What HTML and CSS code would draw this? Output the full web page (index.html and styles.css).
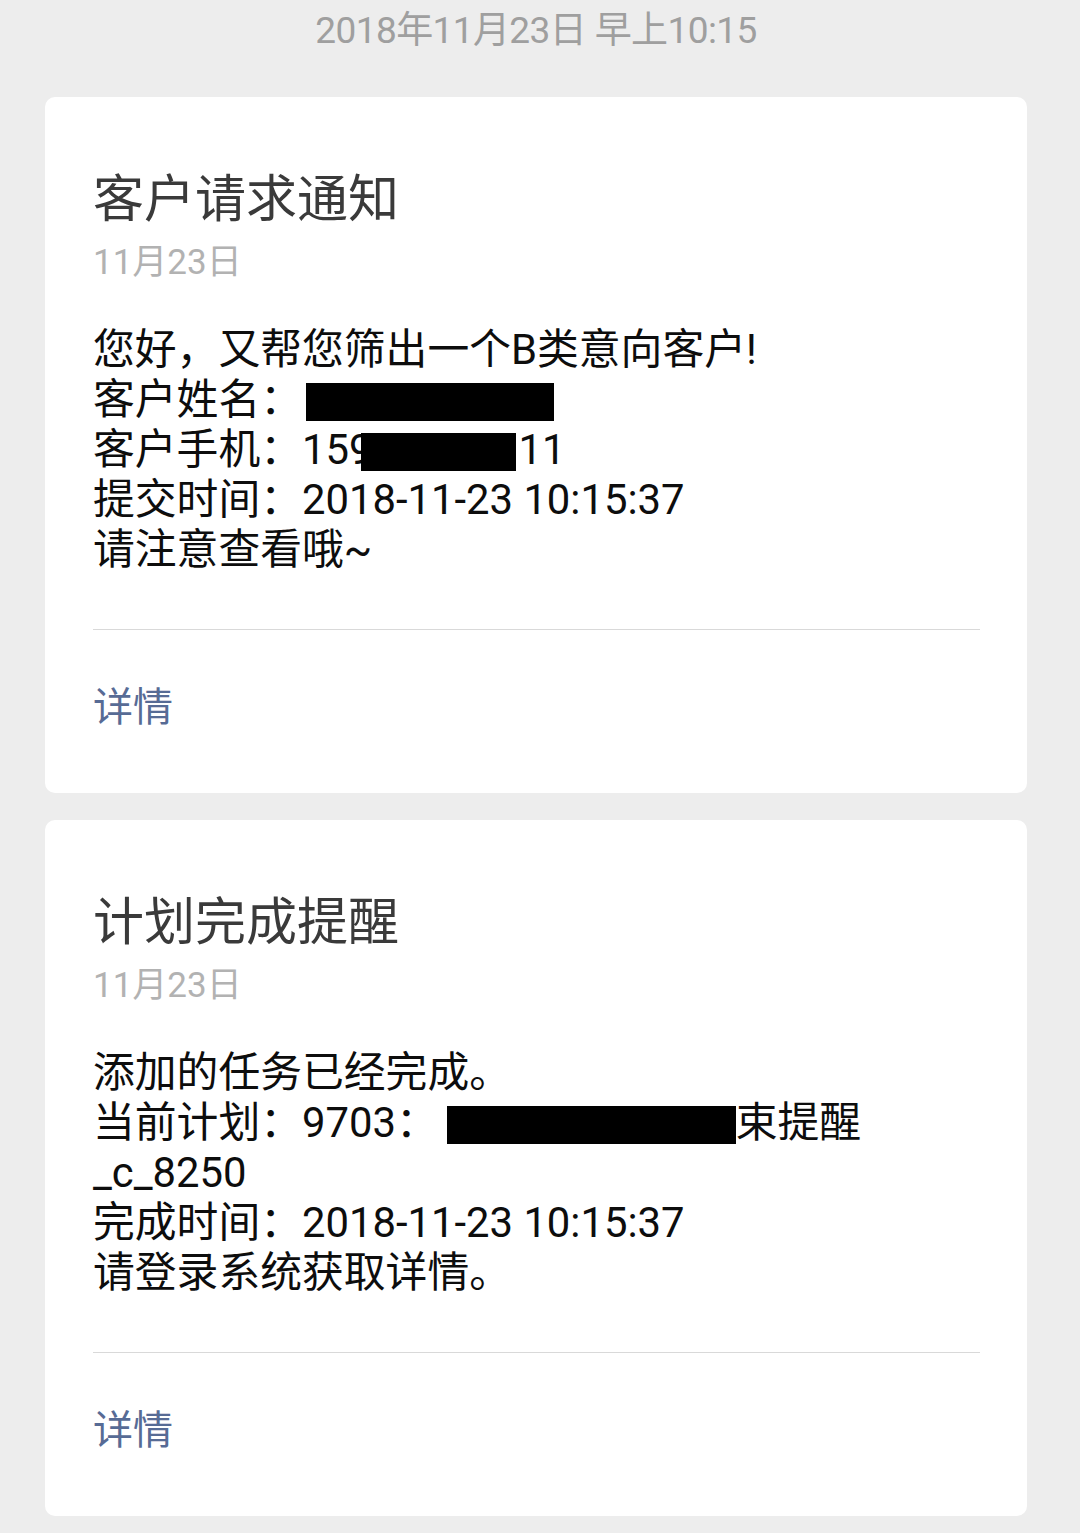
FILE: index.html
```html
<!DOCTYPE html>
<html lang="zh-CN">
<head>
<meta charset="utf-8">
<title>消息</title>
<link rel="stylesheet" href="styles.css">
</head>
<body>
<div class="page">
  <div class="stamp">2018年11月23日 早上10:15</div>

  <div class="card">
    <div class="title">客户请求通知</div>
    <div class="date">11月23日</div>
    <div class="body">
      <div class="line">您好，又帮您筛出一个B类意向客户!</div>
      <div class="line">客户姓名：<span class="redact r-name"></span></div>
      <div class="line">客户手机：159<span class="redact r-phone"></span>11</div>
      <div class="line">提交时间：2018-11-23 10:15:37</div>
      <div class="line">请注意查看哦~</div>
    </div>
    <div class="divider"></div>
    <div class="more">详情</div>
  </div>

  <div class="card">
    <div class="title">计划完成提醒</div>
    <div class="date">11月23日</div>
    <div class="body">
      <div class="line">添加的任务已经完成。</div>
      <div class="line">当前计划：9703：<span class="redact r-plan"></span>束提醒</div>
      <div class="line">_c_8250</div>
      <div class="line">完成时间：2018-11-23 10:15:37</div>
      <div class="line">请登录系统获取详情。</div>
    </div>
    <div class="divider"></div>
    <div class="more">详情</div>
  </div>
</div>
</body>
</html>
```

FILE: styles.css
```css
html, body {
  margin: 0;
  padding: 0;
  background: #ededed;
}
body {
  font-family: Roboto, "Noto Sans CJK SC", sans-serif;
}
.page {
  width: 1080px;
  height: 1533px;
  overflow: hidden;
  display: flex;
  flex-direction: column;
  align-items: flex-start;
  padding-left: 45px;
  box-sizing: border-box;
}
.stamp {
  width: 982px;
  height: 62px;
  line-height: 62px;
  font-size: 37px;
  color: #9f9f9f;
  text-align: center;
  letter-spacing: -0.6px;
}
.card {
  width: 982px;
  box-sizing: border-box;
  margin-top: 35px;
  background: #fff;
  border-radius: 10px;
  padding: 73px 47px 55px 48px;
}
.card + .card {
  margin-top: 27px;
}
.title {
  font-size: 51px;
  line-height: 60px;
  color: #3a3a3a;
  font-weight: 400;
}
.date {
  margin-top: 11px;
  font-size: 35px;
  line-height: 44px;
  color: #b2b2b2;
}
.body {
  margin-top: 40px;
  font-size: 41.8px;
  line-height: 50px;
  color: #0d0d0d;
}
.line {
  white-space: nowrap;
}
.redact {
  display: inline-block;
  background: #000;
  height: 38px;
  vertical-align: -7px;
}
.r-name {
  width: 248px;
  margin-left: 4px;
}
.r-phone {
  width: 155px;
  margin-left: -11px;
  margin-right: 2px;
}
.r-plan {
  width: 289px;
  margin-left: 9px;
}
.divider {
  margin-top: 54px;
  height: 1px;
  background: #d9d9d9;
}
.more {
  margin-top: 48px;
  font-size: 40px;
  line-height: 60px;
  color: #576b95;
}
```
